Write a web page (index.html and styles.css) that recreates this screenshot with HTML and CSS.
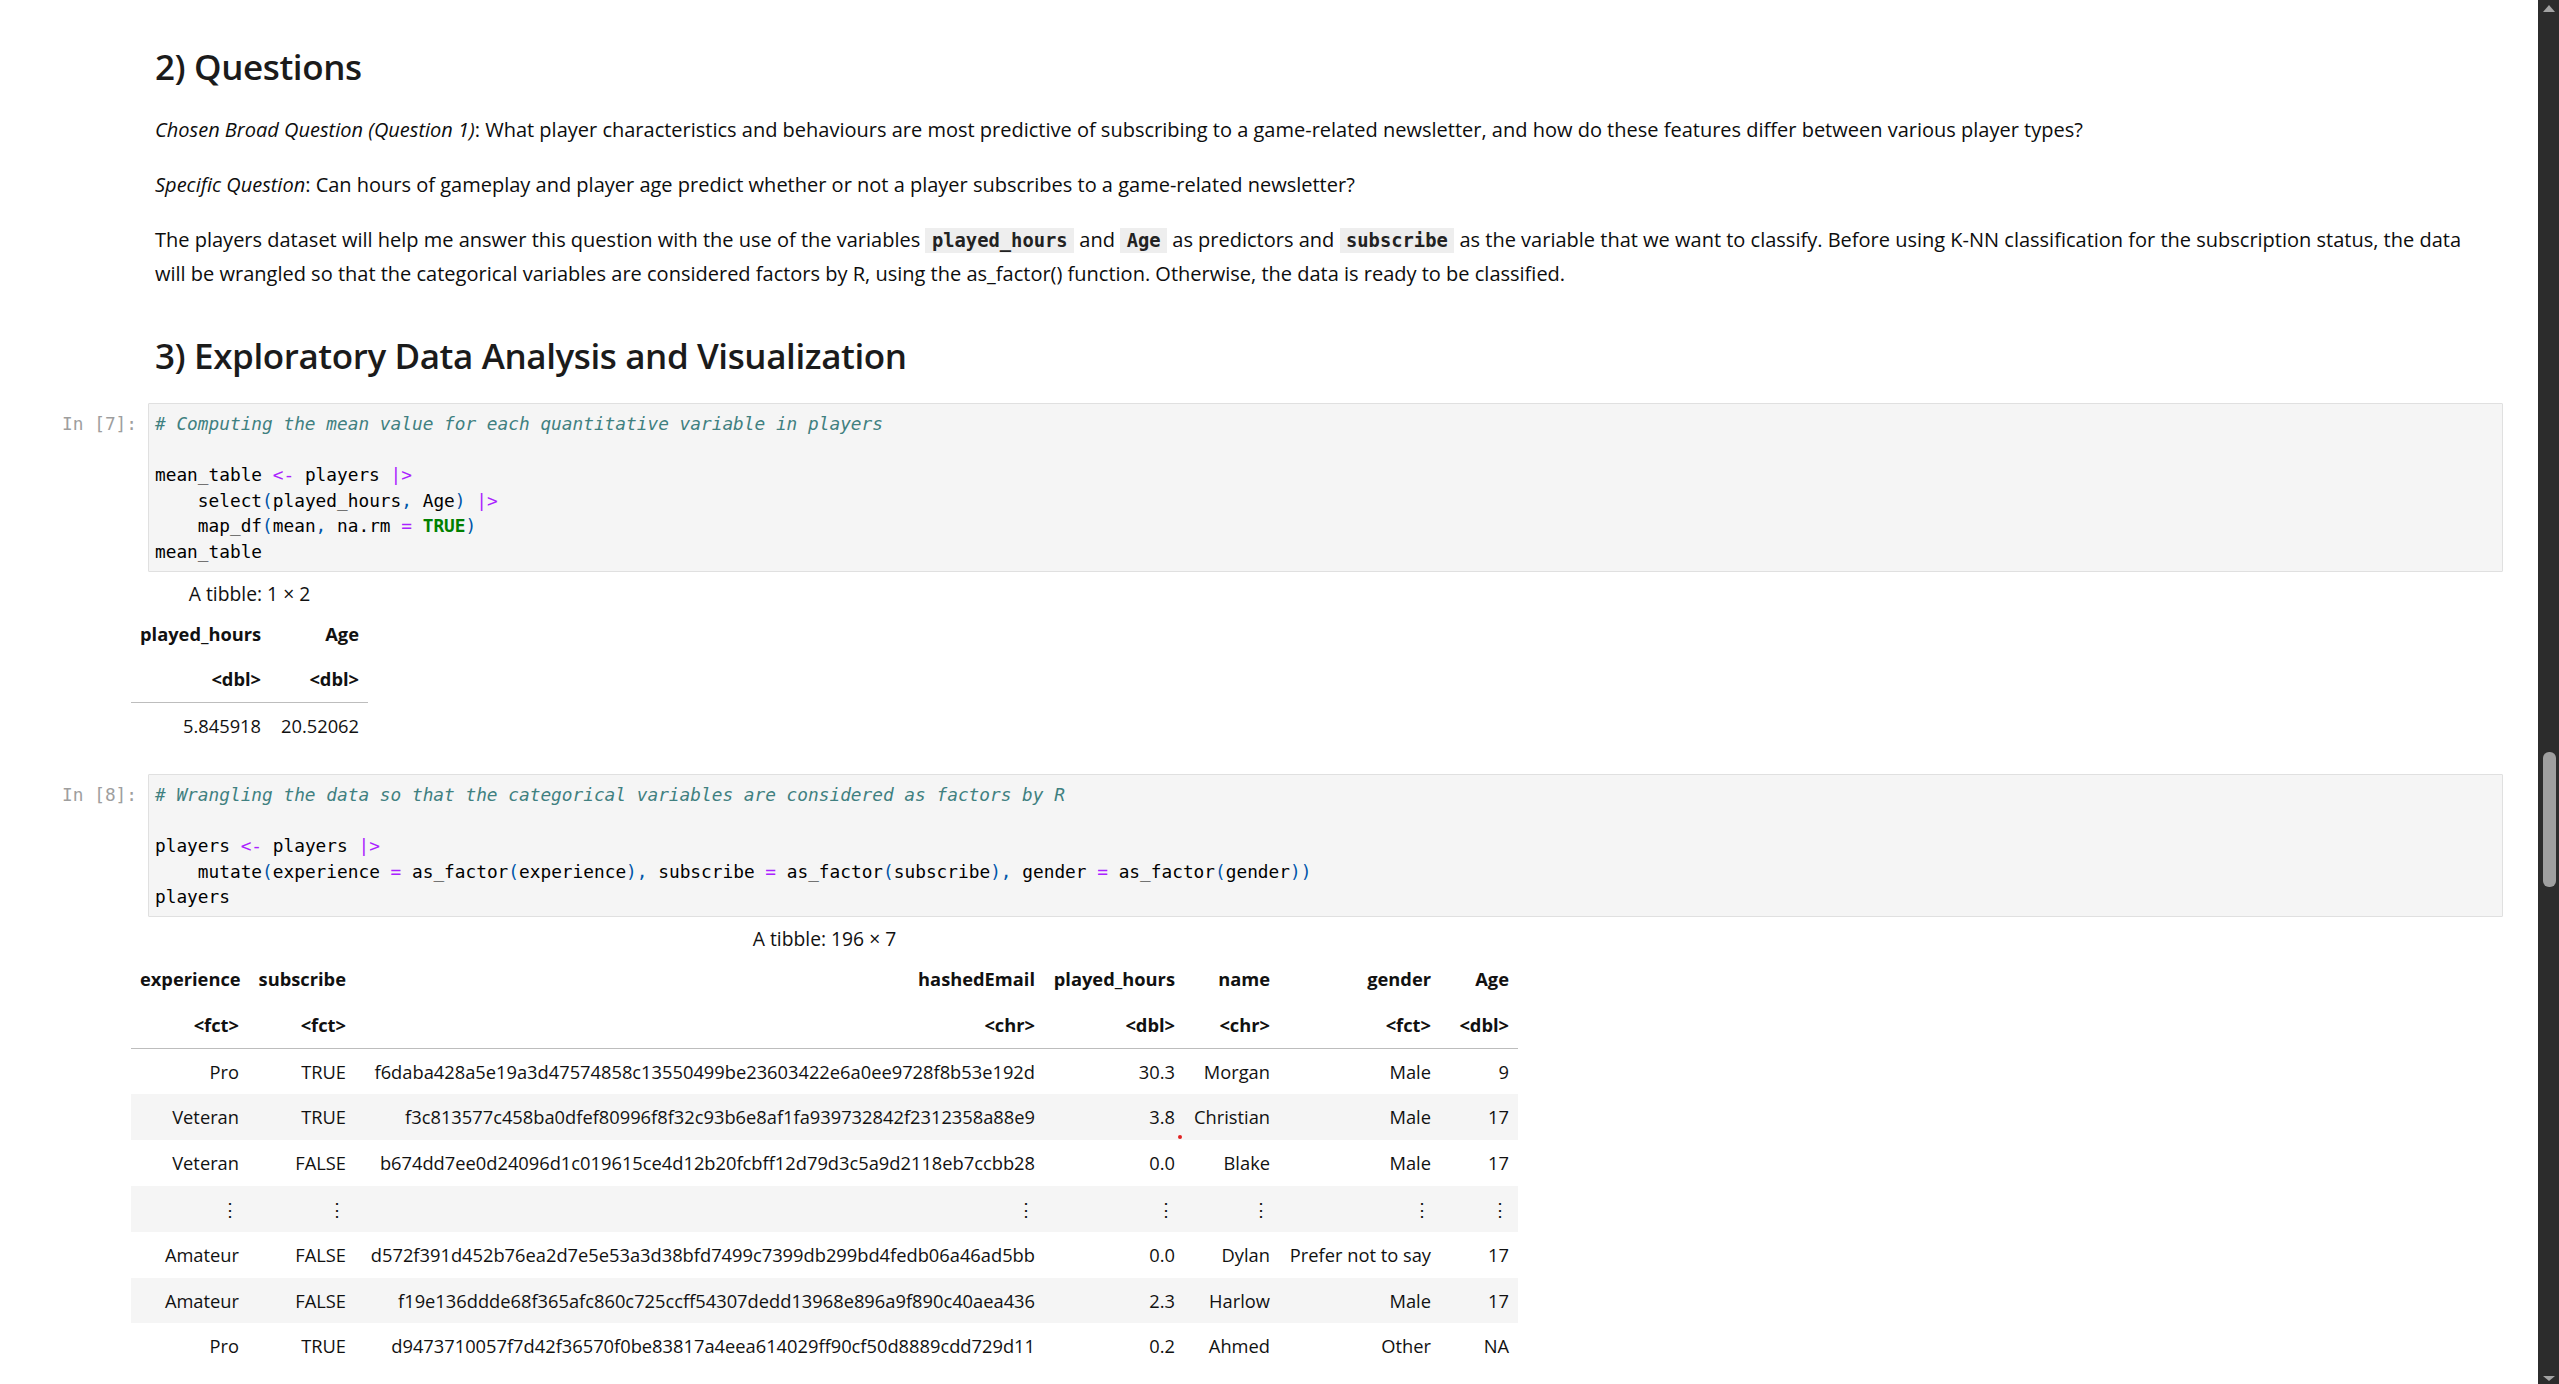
FILE: index.html
```html
<!DOCTYPE html>
<html lang="en">
<head>
<meta charset="utf-8">
<title>Notebook</title>
<link rel="stylesheet" href="styles.css">
</head>
<body>
<div class="app">
  <main class="nb">
    <section class="md">
      <h2>2) Questions</h2>
      <p class="p-first"><em>Chosen Broad Question (Question 1)</em>: What player characteristics and behaviours are most predictive of subscribing to a game-related newsletter, and how do these features differ between various player types?</p>
      <p><em>Specific Question</em>: Can hours of gameplay and player age predict whether or not a player subscribes to a game-related newsletter?</p>
      <p>The players dataset will help me answer this question with the use of the variables <code>played_hours</code> and <code>Age</code> as predictors and <code>subscribe</code> as the variable that we want to classify. Before using K-NN classification for the subscription status, the data will be wrangled so that the categorical variables are considered factors by R, using the as_factor() function. Otherwise, the data is ready to be classified.</p>
      <h2 class="h-eda">3) Exploratory Data Analysis and Visualization</h2>
    </section>

    <div class="cell">
      <div class="prompt">In [7]:</div>
<pre class="input"><span class="c"># Computing the mean value for each quantitative variable in players</span>

mean_table <span class="o">&lt;-</span> players <span class="o">|&gt;</span>
    select<span class="p">(</span>played_hours<span class="p">,</span> Age<span class="p">)</span> <span class="o">|&gt;</span>
    map_df<span class="p">(</span>mean<span class="p">,</span> na.rm <span class="o">=</span> <span class="k">TRUE</span><span class="p">)</span>
mean_table</pre>
    </div>
    <div class="output">
      <table class="tbl t1">
        <caption>A tibble: 1 × 2</caption>
        <colgroup><col class="w139"><col class="w98"></colgroup>
        <thead>
          <tr><th>played_hours</th><th>Age</th></tr>
          <tr><th>&lt;dbl&gt;</th><th>&lt;dbl&gt;</th></tr>
        </thead>
        <tbody>
          <tr><td>5.845918</td><td>20.52062</td></tr>
        </tbody>
      </table>
    </div>

    <div class="cell">
      <div class="prompt">In [8]:</div>
<pre class="input"><span class="c"># Wrangling the data so that the categorical variables are considered as factors by R</span>

players <span class="o">&lt;-</span> players <span class="o">|&gt;</span>
    mutate<span class="p">(</span>experience <span class="o">=</span> as_factor<span class="p">(</span>experience<span class="p">),</span> subscribe <span class="o">=</span> as_factor<span class="p">(</span>subscribe<span class="p">),</span> gender <span class="o">=</span> as_factor<span class="p">(</span>gender<span class="p">))</span>
players</pre>
    </div>
    <div class="output">
      <table class="tbl t2">
        <caption>A tibble: 196 × 7</caption>
        <colgroup><col class="w117"><col class="w107"><col class="w689"><col class="w140"><col class="w95"><col class="w161"><col class="w78"></colgroup>
        <thead>
          <tr><th>experience</th><th>subscribe</th><th>hashedEmail</th><th>played_hours</th><th>name</th><th>gender</th><th>Age</th></tr>
          <tr><th>&lt;fct&gt;</th><th>&lt;fct&gt;</th><th>&lt;chr&gt;</th><th>&lt;dbl&gt;</th><th>&lt;chr&gt;</th><th>&lt;fct&gt;</th><th>&lt;dbl&gt;</th></tr>
        </thead>
        <tbody>
          <tr><td>Pro</td><td>TRUE</td><td>f6daba428a5e19a3d47574858c13550499be23603422e6a0ee9728f8b53e192d</td><td>30.3</td><td>Morgan</td><td>Male</td><td>9</td></tr>
          <tr><td>Veteran</td><td>TRUE</td><td>f3c813577c458ba0dfef80996f8f32c93b6e8af1fa939732842f2312358a88e9</td><td class="dotcell">3.8<span class="dot"></span></td><td>Christian</td><td>Male</td><td>17</td></tr>
          <tr><td>Veteran</td><td>FALSE</td><td>b674dd7ee0d24096d1c019615ce4d12b20fcbff12d79d3c5a9d2118eb7ccbb28</td><td>0.0</td><td>Blake</td><td>Male</td><td>17</td></tr>
          <tr><td>⋮</td><td>⋮</td><td>⋮</td><td>⋮</td><td>⋮</td><td>⋮</td><td>⋮</td></tr>
          <tr><td>Amateur</td><td>FALSE</td><td>d572f391d452b76ea2d7e5e53a3d38bfd7499c7399db299bd4fedb06a46ad5bb</td><td>0.0</td><td>Dylan</td><td>Prefer not to say</td><td>17</td></tr>
          <tr><td>Amateur</td><td>FALSE</td><td>f19e136ddde68f365afc860c725ccff54307dedd13968e896a9f890c40aea436</td><td>2.3</td><td>Harlow</td><td>Male</td><td>17</td></tr>
          <tr><td>Pro</td><td>TRUE</td><td>d9473710057f7d42f36570f0be83817a4eea614029ff90cf50d8889cdd729d11</td><td>0.2</td><td>Ahmed</td><td>Other</td><td>NA</td></tr>
        </tbody>
      </table>
    </div>
  </main>

  <div class="scrollbar">
    <div class="arrow-up"></div>
    <div class="thumb"></div>
    <div class="arrow-down"></div>
  </div>
</div>
</body>
</html>
```

FILE: styles.css
```css
html, body {
  margin: 0;
  padding: 0;
  background: #ffffff;
}

body {
  font-family: "Open Sans", "Noto Sans", sans-serif;
  color: #0d0d0d;
}

.app {
  display: flex;
  height: 100vh;
  overflow: hidden;
}

.nb {
  flex: 1;
  min-width: 0;
  overflow: hidden;
}

/* ---------- markdown ---------- */
.md {
  padding: 44px 42px 24px 155px;
}

.md h2 {
  margin: 0;
  font-size: 35px;
  font-weight: 600;
  letter-spacing: -0.4px;
  line-height: 46px;
  color: #1b1b1b;
}

.md p {
  margin: 22px 0 0 0;
  font-size: 20px;
  line-height: 33px;
}

.md p.p-first {
  margin-top: 23px;
}

.md h2.h-eda {
  margin-top: 43px;
}

.md code {
  font-family: "DejaVu Sans Mono", "Liberation Mono", monospace;
  font-size: 18.8px;
  font-weight: bold;
  background: #eeeeee;
  padding: 2px 6.5px;
  color: #222222;
}

/* ---------- code cells ---------- */
.cell {
  display: flex;
  align-items: flex-start;
  padding-right: 35px;
}

.prompt {
  width: 148px;
  flex: none;
  box-sizing: border-box;
  padding: 8px 11px 0 0;
  text-align: right;
  font-family: "DejaVu Sans Mono", "Liberation Mono", monospace;
  font-size: 17.8px;
  line-height: 25.6px;
  color: #9e9e9e;
}

.input {
  flex: 1;
  min-width: 0;
  margin: 0;
  padding: 7px 6px 6px 6px;
  background: #f5f5f5;
  border: 1px solid #e0e0e0;
  border-radius: 1px;
  font-family: "DejaVu Sans Mono", "Liberation Mono", monospace;
  font-size: 17.8px;
  line-height: 25.6px;
  color: #000000;
  white-space: pre;
  overflow: hidden;
}

.input .c { color: #408080; font-style: italic; }
.input .o { color: #aa22ff; }
.input .k { color: #008000; font-weight: bold; }
.input .p { color: #0055aa; }

/* ---------- outputs ---------- */
.output {
  padding: 10px 0 25px 131px;
}

.tbl {
  border-collapse: collapse;
  border-spacing: 0;
  table-layout: fixed;
  font-size: 18.3px;
  color: #111111;
}

.tbl caption {
  font-size: 19.3px;
  line-height: 24px;
  padding-bottom: 5px;
  font-weight: normal;
  text-align: center;
}

.t1 { width: 237px; }
.t2 { width: 1387px; }

.w139 { width: 139px; }
.w98 { width: 98px; }
.w117 { width: 117px; }
.w107 { width: 107px; }
.w689 { width: 689px; }
.w140 { width: 140px; }
.w95 { width: 95px; }
.w161 { width: 161px; }
.w78 { width: 78px; }

.tbl th,
.tbl td {
  padding: 9px 9px;
  line-height: 27.8px;
  text-align: right;
  white-space: nowrap;
  overflow: visible;
}

.tbl th {
  font-weight: bold;
}

.tbl thead {
  border-bottom: 1px solid #bdbdbd;
}

.tbl tbody tr:nth-child(even) {
  background: #f5f5f5;
}

.dotcell {
  position: relative;
}

.dot {
  position: absolute;
  right: 2px;
  bottom: 1px;
  width: 4px;
  height: 4px;
  border-radius: 50%;
  background: #e02020;
}

/* ---------- scrollbar ---------- */
.scrollbar {
  width: 21px;
  flex: none;
  background: #2c2c2c;
  display: flex;
  flex-direction: column;
  align-items: flex-start;
}

.arrow-up {
  margin: 5px 0 0 5px;
  width: 0;
  height: 0;
  border-left: 6px solid transparent;
  border-right: 6px solid transparent;
  border-bottom: 7px solid #a3a3a3;
}

.thumb {
  margin: 740px 0 0 5px;
  width: 13px;
  height: 135px;
  border-radius: 6px;
  background: #9f9f9f;
}

.arrow-down {
  margin: auto 0 3px 5px;
  width: 0;
  height: 0;
  border-left: 6px solid transparent;
  border-right: 6px solid transparent;
  border-top: 5px solid #a3a3a3;
}
```
